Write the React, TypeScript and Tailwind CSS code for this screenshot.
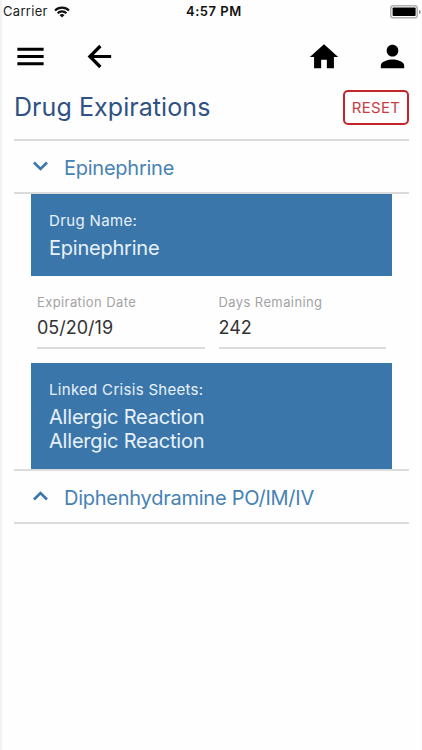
import { MdHome, MdMenu, MdPerson } from "react-icons/md";

const sheets = ["Allergic Reaction", "Allergic Reaction"];

export default function App() {
  return (
    <div className="h-[750px] w-[422px] overflow-hidden border-l-2 border-r border-l-[#f3f3f3] border-r-[#fafafa] bg-[#fefefe] font-['Inter',sans-serif]">
      <StatusBar />
      <NavBar />
      <main className="pr-3 pl-3">
        <div className="flex h-[63px] items-center justify-between">
          <h1 className="text-[25px] tracking-[0.07px] text-[#2f5282]">Drug Expirations</h1>
          <button className="h-[35px] w-[66px] rounded-[5px] border-2 border-[#c4262b] pt-px text-[15px] tracking-[0.3px] text-[#c93c42]">
            RESET
          </button>
        </div>
        <section className="border-t-2 border-[#dbdbdb]">
          <DrugHeader name="Epinephrine" open />
          <div className="mr-[17px] ml-[17px]">
            <div className="h-[82px] bg-[#3b76aa] px-[18px] pt-4 text-[#e8f2fb]">
              <p className="text-[15px] leading-[22px] tracking-[0.35px]">Drug Name:</p>
              <p className="mt-1 text-[20px] leading-6 tracking-[-0.22px]">Epinephrine</p>
            </div>
            <div className="flex h-[87px] gap-[14px] px-1.5 pt-[17px]">
              <Field label="Expiration Date" value="05/20/19" />
              <Field label="Days Remaining" value="242" />
            </div>
            <div className="h-[106px] bg-[#3b76aa] px-[18px] pt-4 text-[#e8f2fb]">
              <p className="text-[15px] leading-[22px] tracking-[0.3px]">Linked Crisis Sheets:</p>
              <div className="mt-1 text-[20px] leading-6 tracking-[-0.2px]">
                {sheets.map((sheet, i) => (
                  <p key={i}>{sheet}</p>
                ))}
              </div>
            </div>
          </div>
        </section>
        <section className="border-t-2 border-[#dbdbdb]">
          <DrugHeader name="Diphenhydramine PO/IM/IV" />
        </section>
      </main>
    </div>
  );
}

function StatusBar() {
  return (
    <div className="flex h-6 items-center justify-between text-[13px] text-[#222]">
      <div className="flex w-[184px] items-center gap-[6px] pl-px">
        <span className="tracking-[0.3px]">Carrier</span>
        <svg width="16" height="12" viewBox="0 0 16 12" fill="none" stroke="#111" strokeWidth="2.1">
          <path d="M1 4.5a10 10 0 0 1 14 0" />
          <path d="M3.6 7.2a6.2 6.2 0 0 1 8.8 0" />
          <path d="M8 11.6 5.5 9.1a3.6 3.6 0 0 1 5 0z" fill="#111" stroke="none" />
        </svg>
      </div>
      <span className="flex-1 font-semibold tracking-[0.5px] text-[#111]">4:57 PM</span>
      <svg width="31" height="14" viewBox="0 0 31 14">
        <rect x="0.8" y="0.8" width="26.4" height="12" rx="2.6" fill="#fff" stroke="#b0b0b0" strokeWidth="1.5" />
        <rect x="2.6" y="2.5" width="23" height="8.6" rx="0.8" fill="#000" />
        <path d="M29 5v4c1.2-.4 1.8-1.1 1.8-2S30.200 5.400 29 5z" fill="#999" />
      </svg>
    </div>
  );
}

function NavBar() {
  return (
    <nav className="flex h-[52px] items-center justify-between pt-[13px] pr-[11px] pl-[11px] text-black">
      <div className="flex gap-[34px]">
        <MdMenu size={35} />
        <svg width="35" height="35" viewBox="0 0 24 24" fill="none" stroke="currentColor" strokeWidth="2.2">
          <path d="M20 12H5.500M12.600 4.800L5.400 12l7.200 7.200" />
        </svg>
      </div>
      <div className="flex items-center gap-[34.5px]">
        <MdHome size={34} />
        <MdPerson size={35} />
      </div>
    </nav>
  );
}

function DrugHeader({ name, open }: { name: string; open?: boolean }) {
  return (
    <div className="flex h-[53px] items-center gap-4 border-b-2 border-[#dbdbdb] pl-[19px] text-[#4682b4]">
      <svg className="mb-[2px]" width="15" height="10" viewBox="0 0 15 10" fill="none" stroke="#3b76aa" strokeWidth="2.6">
        <path d={open ? "M1 1.500l6.500 6.500L14 1.500" : "M1 8.500l6.500-6.500L14 8.500"} />
      </svg>
      <h2 className="pt-[3px] text-[20px] tracking-[-0.25px]">{name}</h2>
    </div>
  );
}

function Field({ label, value }: { label: string; value: string }) {
  return (
    <div className="h-[56px] flex-1 border-b-2 border-[#dbdbdb]">
      <p className="text-[13px] leading-[18px] tracking-[0.4px] text-[#a3a3a3]">{label}</p>
      <p className="mt-[5px] text-[18px] leading-6 text-[#333]">{value}</p>
    </div>
  );
}
